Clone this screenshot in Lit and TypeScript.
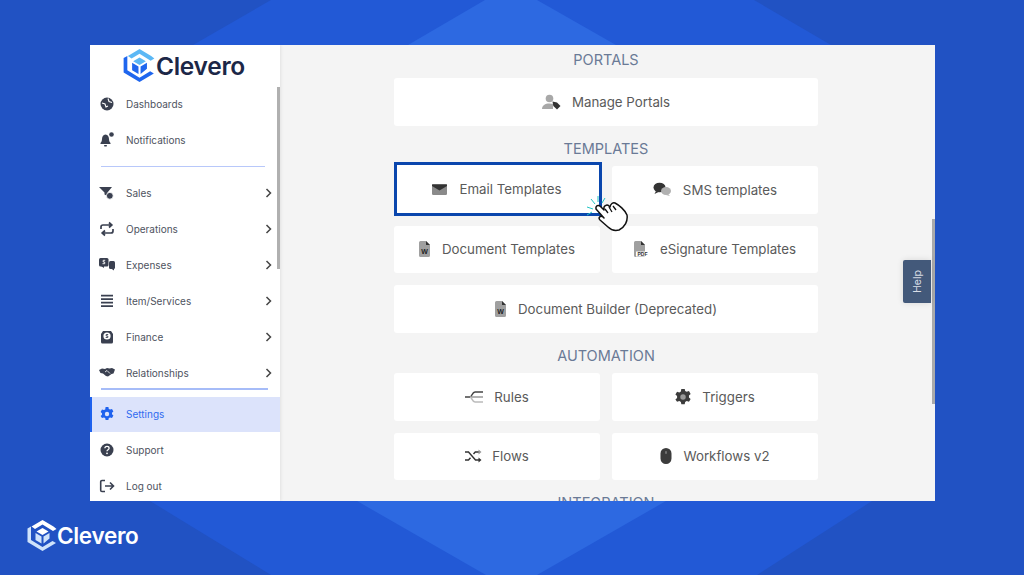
import { LitElement, html, css, svg } from "lit";
import { customElement } from "lit/decorators.js";

const D = "#3a4050";
const navIcons: Record<string, unknown> = {
  dash: svg`<circle cx="8" cy="8" r="6.500" fill="${D}"/><path d="M3 7l3 1 1 3 2-1M9 2.500l1 3 3 1" stroke="#fff" stroke-width="1.100" fill="none"/>`,
  bell: svg`<path d="M6.500 2.500c-2.400.5-3.500 2.300-3.500 4.500 0 2-.7 3-1.500 4v1h10v-1c-.8-1-1.500-2-1.500-4 0-2.200-1.100-4-3.500-4.500z" fill="${D}"/><rect x="5" y="13" width="3" height="1.500" rx=".7" fill="${D}"/><circle cx="12.500" cy="2.500" r="2.300" fill="${D}"/>`,
  sales: svg`<path d="M0 2h13L8.500 7.500V11L5.500 9.500V7.500z" fill="${D}"/><circle cx="10.800" cy="10.800" r="3.400" fill="${D}" stroke="#fff" stroke-width=".8"/>`,
  ops: svg`<path d="M2 8V6a2 2 0 0 1 2-2h8M10 1.500 12.800 4 10 6.500M14 8v2a2 2 0 0 1-2 2H4M6 9.500 3.200 12 6 14.500" stroke="${D}" stroke-width="1.700" fill="none"/>`,
  exp: svg`<rect x="0" y="1" width="9.500" height="8.500" rx="1.500" fill="${D}"/><path d="M2 9h3v2z" fill="${D}"/><rect x="10" y="4" width="6" height="8" rx="1.500" fill="${D}"/><path d="M12 11.500h3v2z" fill="${D}"/><path d="M6.200 3.300H4.200v1.700h1.500v1.700H3.500" stroke="#fff" stroke-width=".9" fill="none"/>`,
  list: svg`<path d="M2 2.700h12M2 6.200h12M2 9.700h12M2 13.200h12" stroke="${D}" stroke-width="1.700"/>`,
  fin: svg`<path d="M2 5l2-3h8l2 3v8a1.500 1.500 0 0 1-1.500 1.500h-9A1.500 1.500 0 0 1 2 13z" fill="${D}"/><circle cx="8" cy="7" r="3.600" fill="#fff"/><path d="M9.200 5.500H7.200v1.500h1.600v1.500H6.700" stroke="${D}" stroke-width=".9" fill="none"/>`,
  rel: svg`<path d="M0 5l3-1.500 3 .5 2-1 2.500.5 2.500-.5 3 1.500-1.500 4-2 .5-3.500 2.500-2-.5-3-2.500-2.500-.5z" fill="${D}"/><path d="M6 7l2-1.500 3 3" stroke="#fff" stroke-width=".8" fill="none"/>`,
  gear: svg`<path d="M6.600 1h2.800l.4 1.900 1.300.7 1.900-.6 1.400 2.400-1.400 1.300v1.600l1.400 1.300-1.400 2.400-1.900-.6-1.300.7-.4 1.900H6.600l-.4-1.900-1.300-.7-1.900.6L1.600 10.100 3 8.800V7.200L1.600 5.900 3 3.500l1.900.6 1.300-.7z" fill="#1f62ee"/><circle cx="8" cy="8" r="2.200" fill="#dce3fb"/>`,
  help: svg`<circle cx="8" cy="8" r="6.500" fill="${D}"/><path d="M5.900 6.300c0-1.200 1-1.900 2.100-1.900s2.100.7 2.100 1.800c0 1.500-2.100 1.500-2.100 3" stroke="#fff" stroke-width="1.300" fill="none"/><circle cx="8" cy="11.300" r=".9" fill="#fff"/>`,
  out: svg`<path d="M6 2.500H3A1.300 1.300 0 0 0 1.700 3.800v8.400A1.300 1.300 0 0 0 3 13.500h3M6 8h8.500M11 4.500 14.500 8 11 11.500" stroke="${D}" stroke-width="1.600" fill="none"/>`,
};

const G = "#8a8a8a";
const K = "#3c3c3c";
const cardIcons: Record<string, unknown> = {
  person: svg`<circle cx="7.500" cy="4.500" r="3.800" fill="#a8a8a8"/><path d="M0 15c0-3.500 3-5.500 7.500-5.500 1.500 0 2.500.2 3.500.6V15z" fill="#a8a8a8"/><path d="M10.500 7.500 15 8.500 18.500 12l-3.500 3.500-3.700-3.500z" fill="#333"/>`,
  mail: svg`<rect x="0" y="1" width="15" height="11" rx="1.200" fill="${G}"/><path d="M0 1.500h15v1.500L7.500 7.500 0 3z" fill="#333"/>`,
  chat: svg`<ellipse cx="6.500" cy="5.500" rx="6" ry="4.800" fill="#333"/><path d="M3 9 1.500 12l4-2z" fill="#333"/><ellipse cx="13" cy="9" rx="5" ry="4" fill="#b0b0b0"/><path d="M15 12l2 2-4-1z" fill="#b0b0b0"/>`,
  word: svg`<path d="M0 1.500A1.500 1.500 0 0 1 1.500 0H7l4 4v10.500A1.500 1.500 0 0 1 9.500 16h-8A1.500 1.500 0 0 1 0 14.500z" fill="#a0a0a0"/><path d="M7 0l4 4H7z" fill="#333"/><text x="5.500" y="13" font-size="7" font-weight="700" font-family="Liberation Sans" text-anchor="middle" fill="#222">W</text>`,
  pdf: svg`<path d="M0 1.500A1.500 1.500 0 0 1 1.500 0H7l4 4v10.500A1.500 1.500 0 0 1 9.500 16h-8A1.500 1.500 0 0 1 0 14.500z" fill="#a0a0a0"/><path d="M7 0l4 4H7z" fill="#333"/><rect x="2" y="10.500" width="13" height="5" fill="#fff"/><text x="8.500" y="15" font-size="5" font-weight="700" font-family="Liberation Sans" text-anchor="middle" fill="#333">PDF</text>`,
  rules: svg`<path d="M0 7h5c2 0 2-5 5-5h8" stroke="#444" stroke-width="1.300" fill="none"/><path d="M5 7h13" stroke="#888" stroke-width="1.300"/><path d="M5 7c2 0 2 5 5 5h8" stroke="#bbb" stroke-width="1.500" fill="none"/>`,
  gear: svg`<g transform="translate(-1.500 -1.500) scale(1.190)"><path d="M6.600 1h2.800l.4 1.900 1.300.7 1.900-.6 1.400 2.400-1.400 1.300v1.600l1.400 1.300-1.400 2.400-1.900-.6-1.300.7-.4 1.900H6.600l-.4-1.900-1.300-.7-1.900.6L1.600 10.100 3 8.800V7.200L1.600 5.900 3 3.500l1.900.6 1.300-.7z" fill="${K}"/><circle cx="8" cy="8" r="2.300" fill="#999"/></g>`,
  flows: svg`<path d="M0 3h3.500l7 8H14M0 11h3.500l2-2.300M8.500 5l1.800-2H14" stroke="#333" stroke-width="1.400" fill="none"/><path d="M13.500 0.500 16.500 3l-3 2.500z" fill="#999"/><path d="M13.500 8.500 16.500 11l-3 2.500z" fill="#333"/>`,
  mouse: svg`<path d="M6 0a5.500 5.500 0 0 1 5.500 5.500v5a5.500 5.500 0 0 1-11 0v-5A5.500 5.500 0 0 1 6 0z" fill="${K}"/><rect x="5.300" y="3" width="1.400" height="3" rx=".7" fill="#888"/>`,
};

function logoMark(top: string, side: string, cube: string) {
  return svg`
    <path d="M5 9 16 2.500 27 9 30 11.500 26.500 13.500 16 7 8.500 11.500z" fill="${top}"/>
    <path d="M1 11 4.500 9v13.500L16 29.500 26 23.500 29.500 25.500 16 33.500 1 24.500z" fill="${side}"/>
    <path d="M16 10.500 22 14 16 17.500 10 14z" fill="${top}"/>
    <path d="M9 15.500 15 19v7L9 22.500z" fill="${cube}"/>
    <path d="M23 15.500V21L17 26v-7z" fill="${cube}"/>`;
}

@customElement("app-root")
export class AppRoot extends LitElement {
  static styles = css`
    :host { display: block; width: 1024px; height: 575px; overflow: hidden; }
    .stage {
      position: relative; width: 1024px; height: 575px; background: #2152c3;
      font-family: Inter, "Liberation Sans", sans-serif; overflow: hidden;
      display: flex; align-items: flex-start; padding: 45px 0 0 90px; box-sizing: border-box;
    }
    .bgart { position: absolute; inset: 0; }
    .win {
      position: relative; width: 845px; height: 456px; background: #f4f4f4;
      display: flex; overflow: hidden;
    }
    .side {
      width: 190px; flex: none; background: #fff; position: relative;
      box-shadow: 1px 0 3px rgba(0,0,0,.08); height: 100%; z-index: 1;
    }
    .brand { height: 41px; display: flex; align-items: center; gap: 1px; padding-left: 33px; box-sizing: border-box; }
    .brand svg { width: 32px; height: 35px; flex: none; }
    .brand span { font-size: 24.500px; font-weight: 600; color: #1c2747; letter-spacing: -.3px; }
    .item {
      height: 36px; display: flex; align-items: center; font-size: 10px; color: #4e5360;
      position: relative; padding-left: 9px; box-sizing: border-box;
    }
    .item svg.ic { width: 16px; height: 16px; flex: none; margin-right: 11px; }
    .item .chev { position: absolute; left: 175px; top: 50%; margin-top: -5px; width: 7px; height: 10px; }
    .item.active { height: 35px; padding-bottom: 1.500px; background: #dce3fb; color: #2f6bf0; border-left: 2px solid #1f62ee; padding-left: 7px; }
    .rule { height: 1px; background: #b8c8fa; }
    .r1 { margin: 8px 15px 8px 11px; width: 164px; }
    .r2 { margin: -3px 12px 7.500px 11px; width: 167px; height: 1.500px; background: #a6bcf8; }
    .sb { position: absolute; left: 187px; top: 42px; width: 3px; height: 182px; background: #b0b0b0; }
    .main { flex: 1; position: relative; padding-left: 114px; width: 424px; }
    .col { width: 424px; display: flex; flex-direction: column; }
    h3 {
      margin: 0; text-align: center; font-weight: 400; font-size: 14.500px;
      color: #6a7a96; letter-spacing: 0;
    }
    h3.first { height: 33px; line-height: 30px; }
    h3.next { height: 40.500px; line-height: 46.500px; }
    .grid { display: grid; grid-template-columns: 206px 206px; column-gap: 12px; row-gap: 12px; }
    .card {
      height: 47.500px; background: #fff; border-radius: 3px; display: flex; align-items: center; justify-content: center;
      font-size: 13.300px; color: #5a5a5a; box-sizing: border-box;
    }
    .card svg { flex: none; }
    .wide { grid-column: 1 / span 2; }
    .sel { border: 3.500px solid #0a46ad; border-radius: 0; height: 54px; margin: -4px -2px -2.500px 0; padding-right: 2px; }
    .helpwrap {
      position: absolute; left: 813px; top: 215px; width: 28px; height: 43px; background: #43597a;
      border-radius: 2px 0 0 2px; color: #d8dde6; font-size: 10.500px; display: flex; align-items: center; justify-content: center;
      box-shadow: 0 0 6px rgba(0,0,0,.12); z-index: 2;
    }
    .helpwrap span { transform: rotate(-90deg); display: block; }
    .sb2 { position: absolute; left: 842px; top: 174px; width: 3px; height: 185px; background: #aaa; }
    .cursor { position: absolute; left: 585px; top: 195px; width: 44px; height: 37px; z-index: 3; }
    .foot { position: absolute; left: 27px; top: 519px; display: flex; align-items: center; gap: 0; color: #fff; }
    .foot svg { width: 30px; height: 33px; }
    .foot span { font-size: 22.500px; font-weight: 600; letter-spacing: -.3px; }
  `;

  private nav(label: string, icon: string, chev = false, active = false) {
    return html`<div class="item ${active ? "active" : ""}">
      <svg class="ic" viewBox="0 0 16 16">${navIcons[icon]}</svg>${label}
      ${chev ? html`<svg class="chev" viewBox="0 0 7 10"><path d="M1.500 1 5.500 5 1.500 9" stroke="#444" stroke-width="1.500" fill="none"/></svg>` : ""}
    </div>`;
  }

  private card(label: string, icon: string, w: number, h: number, gap: number, cls = "") {
    return html`<div class="card ${cls}" style="gap:${gap}px">
      <svg width=${w} height=${h} viewBox="0 0 ${w} ${h}">${cardIcons[icon]}</svg><span>${label}</span>
    </div>`;
  }

  render() {
    return html`<div class="stage">
      <svg class="bgart" viewBox="0 0 1024 575">
        <path d="M271 0H754L831 45H193Z" fill="#2259d6"/>
        <path d="M150 501H872L757 575H271Z" fill="#2259d6"/>
        <path d="M485 0H537L616 45H408Z" fill="#2d69e1"/>
        <path d="M357 501H666L537 575H486Z" fill="#2d69e1"/>
      </svg>
      <div class="win">
        <aside class="side">
          <div class="brand">
            <svg viewBox="0.500 1.500 30 33">${logoMark("#5cb8f5", "#1f66ee", "#1f66ee")}</svg>
            <span>Clevero</span>
          </div>
          ${this.nav("Dashboards", "dash")}
          ${this.nav("Notifications", "bell")}
          <div class="rule r1"></div>
          ${this.nav("Sales", "sales", true)}
          ${this.nav("Operations", "ops", true)}
          ${this.nav("Expenses", "exp", true)}
          ${this.nav("Item/Services", "list", true)}
          ${this.nav("Finance", "fin", true)}
          ${this.nav("Relationships", "rel", true)}
          <div class="rule r2"></div>
          ${this.nav("Settings", "gear", false, true)}
          ${this.nav("Support", "help")}
          ${this.nav("Log out", "out")}
          <div class="sb"></div>
        </aside>
        <main class="main">
          <div class="col">
            <h3 class="first">PORTALS</h3>
            <div class="grid">
              ${this.card("Manage Portals", "person", 19, 16, 11, "wide")}
            </div>
            <h3 class="next">TEMPLATES</h3>
            <div class="grid">
              ${this.card("Email Templates", "mail", 15, 13, 12, "sel")}
              ${this.card("SMS templates", "chat", 19, 15, 11)}
              ${this.card("Document Templates", "word", 11, 16, 12)}
              ${this.card("eSignature Templates", "pdf", 15, 16, 11)}
              ${this.card("Document Builder (Deprecated)", "word", 11, 16, 12, "wide")}
            </div>
            <h3 class="next">AUTOMATION</h3>
            <div class="grid">
              ${this.card("Rules", "rules", 18, 14, 11)}
              ${this.card("Triggers", "gear", 16, 16, 11)}
              ${this.card("Flows", "flows", 17, 14, 10)}
              ${this.card("Workflows v2", "mouse", 12, 16, 11)}
            </div>
            <h3 class="next">INTEGRATION</h3>
          </div>
        </main>
        <div class="sb2"></div>
        <div class="helpwrap"><span>Help</span></div>
      </div>
      <svg class="cursor" viewBox="0 0 44 37">
        <path d="M2 12 8 14M6 4l4 5M13 1v6M20 3l-3 5M2 20l5-3" stroke="#23c4c4" stroke-width="1" fill="none"/>
        <path d="M11 12C12 10 14 10 15.500 11.500L19 15 19 12C20 10 22.500 9.500 24 11L25 12C25.500 9 28 7 30 8 34 10 40 15 42 20 43 26 40 32 34 35 30 36 26 35 23 32L15 25C13 23 15 20 18 22L19 23 11 14Z" fill="#fff" stroke="#111" stroke-width="1.500" stroke-linejoin="round"/>
        <path d="M23 18l-3-4M27 17l-3-5M31 15l-3-4" stroke="#111" stroke-width="1.300" fill="none"/>
      </svg>
      <div class="foot">
        <svg viewBox="0.500 1.500 30 33">${logoMark("#ffffff", "#cfe3fb", "#cfe3fb")}</svg>
        <span>Clevero</span>
      </div>
    </div>`;
  }
}
